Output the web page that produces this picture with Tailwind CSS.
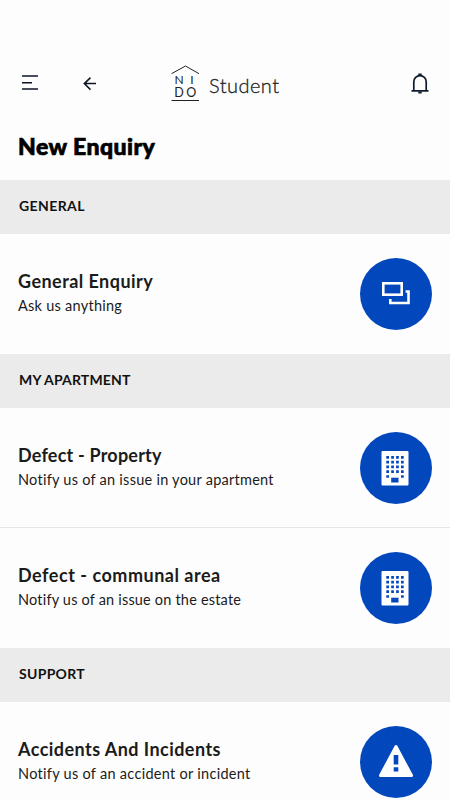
<!DOCTYPE html>
<html lang="en">
<head>
<meta charset="utf-8">
<title>New Enquiry</title>
<script src="https://cdn.jsdelivr.net/npm/@tailwindcss/browser@4"></script>
</head>
<body class="h-[800px] overflow-hidden bg-[#fdfdfd] font-['Lato',sans-serif] text-[#1b1b1b] [font-variant-ligatures:none]">
<svg class="hidden">
  <symbol id="building" viewBox="0 0 72 72">
    <rect x="21.500" y="19" width="27" height="34.500" rx="1" fill="#fff"/>
    <g stroke="#0347bd" stroke-width="2.700" stroke-dasharray="2.700 2.200">
      <path d="M26.300 25.300h17.400M26.300 30.100h17.400M26.300 34.900h17.400M26.300 39.700h17.400"/>
      <path d="M26.300 44.500h2.700M41 44.500h2.700"/>
    </g>
    <rect x="31.200" y="45.700" width="7.300" height="4.800" fill="#0347bd"/>
  </symbol>
</svg>
<header class="mt-[44px] flex h-[79px] items-center">
  <svg class="ml-[18px] size-6" viewBox="0 0 24 24" fill="none" stroke="#0c1424" stroke-width="1.500"><path d="M4 4h16M4 10.700h10M4 17h16"/></svg>
  <svg class="ml-9 size-6" viewBox="0 0 24 24" fill="none" stroke="#0c1424" stroke-width="1.500"><path d="M18 11.600H6.400M12.500 5.600L6.300 11.600l6.200 6"/></svg>
  <svg class="ml-[68px] h-10 w-[110px]" viewBox="0 0 110 40" fill="none" stroke="#222" stroke-width="1">
    <path d="M1.500 9.700L15.500 2L29 9.700M1.500 36.500H29"/>
    <g fill="#222" stroke="none" font-family="Lato" font-weight="400">
      <text x="4.600" y="19.500" font-size="12">N</text><text x="20.300" y="19.500" font-size="12">I</text>
      <text x="4.300" y="32.900" font-size="12.500">D</text><text x="16.200" y="32.900" font-size="12.500">O</text>
      <text x="39" y="29" font-size="20" font-weight="300" textLength="70" stroke="#222" stroke-width=".3">Student</text>
    </g>
  </svg>
  <svg class="ml-[128px] size-6" viewBox="0 0 24 24" fill="none" stroke="#101c2c" stroke-width="1.700"><path d="M3.500 18.800h17M5.800 18.500V9.800a6.200 6.200 0 0 1 12.400 0v8.700"/><path d="M10.300 2.500h3.400M10.300 20.500h3.400" stroke-width="2"/></svg>
</header>
<h1 class="h-[57px] pl-[18px] pt-[7px] text-[23px] leading-[32px] font-black text-black"><span class="tracking-[0.45px] [-webkit-text-stroke:0.7px_black]">New Enquiry</span></h1>
<main>
  <h2 class="flex h-[54px] items-center bg-[#ebebeb] pl-[19px] pb-[3px] text-[14px] font-bold text-[#111]"><span class="tracking-[0.4px]">GENERAL</span></h2>
  <section class="flex h-[120px] items-center justify-between px-[18px]">
    <div><h3 class="-mt-px text-[18px] leading-[25px] font-bold"><span class="tracking-[0.45px]">General Enquiry</span></h3><p class="text-[14.5px] leading-6"><span class="tracking-[0.26px]">Ask us anything</span></p></div>
    <svg class="size-[72px]" viewBox="0 0 72 72"><circle cx="36" cy="36" r="36" fill="#0347bd"/><g fill="none" stroke="#fff" stroke-width="2.600"><rect x="23.300" y="25.300" width="18.400" height="11.400"/><path d="M45.600 33.500H48.500V45H30.300v-4"/></g></svg>
  </section>
  <h2 class="flex h-[54px] items-center bg-[#ebebeb] pl-[19px] pb-[3px] text-[14px] font-bold text-[#111]"><span class="tracking-[0.15px]">MY APARTMENT</span></h2>
  <section class="flex h-[120px] items-center justify-between border-b border-[#e6e6e6] px-[18px] pt-px">
    <div><h3 class="-mt-px text-[18px] leading-[25px] font-bold"><span class="tracking-[0.2px]">Defect - Property</span></h3><p class="text-[14.5px] leading-6"><span class="tracking-[0.26px]">Notify us of an issue in your apartment</span></p></div>
    <svg class="size-[72px]" viewBox="0 0 72 72"><circle cx="36" cy="36" r="36" fill="#0347bd"/><use href="#building"/></svg>
  </section>
  <section class="flex h-[120px] items-center justify-between px-[18px]">
    <div><h3 class="-mt-px text-[18px] leading-[25px] font-bold"><span class="tracking-[0.52px]">Defect - communal area</span></h3><p class="text-[14.5px] leading-6"><span class="tracking-[0.19px]">Notify us of an issue on the estate</span></p></div>
    <svg class="size-[72px]" viewBox="0 0 72 72"><circle cx="36" cy="36" r="36" fill="#0347bd"/><use href="#building"/></svg>
  </section>
  <h2 class="flex h-[54px] items-center bg-[#ebebeb] pl-[19px] pb-[3px] text-[14px] font-bold text-[#111]"><span class="tracking-[0.3px]">SUPPORT</span></h2>
  <section class="flex h-[120px] items-center justify-between px-[18px]">
    <div><h3 class="-mt-px text-[18px] leading-[25px] font-bold"><span class="tracking-[0.45px]">Accidents And Incidents</span></h3><p class="text-[14.5px] leading-6"><span class="tracking-[0.29px]">Notify us of an accident or incident</span></p></div>
    <svg class="size-[72px]" viewBox="0 0 72 72"><circle cx="36" cy="36" r="36" fill="#0347bd"/><path d="M36 20.500L51.500 49.500H20.500Z" fill="#fff" stroke="#fff" stroke-width="3" stroke-linejoin="round"/><path d="M36 29v9.500M36 41.200v4.300" stroke="#0347bd" stroke-width="4.600"/></svg>
  </section>
</main>
</body>
</html>
